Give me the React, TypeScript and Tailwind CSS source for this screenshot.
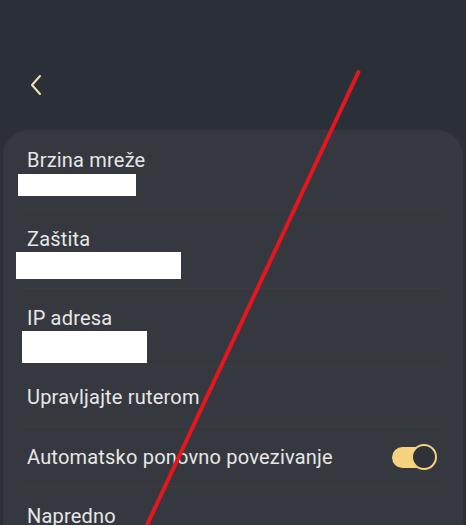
import React from 'react';

const Divider = () => <div className="mx-[19px] h-px bg-[#3e3b38]" />;

export default function App() {
  return (
    <div
      className="relative h-[525px] w-[466px] overflow-hidden bg-[#2b3038]"
      style={{ fontFamily: 'Roboto, "Noto Sans", sans-serif' }}
    >
      {/* header */}
      <div className="h-[130px] pt-[74px] pl-[30px]">
        <svg width="14" height="22" viewBox="0 0 14 22" fill="none">
          <path d="M10 2 L2 11 L10 20" stroke="#f1e3b4" strokeWidth="2" strokeLinecap="round" strokeLinejoin="round" />
        </svg>
      </div>

      {/* card */}
      <div className="mx-[3px] h-[420px] rounded-t-[26px] bg-[#35383f] text-[20px] leading-[26px] tracking-[0.2px] text-[#e7e7e7]">
        <div className="pt-[17px] pb-[13px] pl-[24px]">
          <div>Brzina mreže</div>
          <div className="mt-[1px] ml-[-9px] h-[22px] w-[118px] bg-white" />
        </div>
        <Divider />
        <div className="pt-[16px] pb-[9px] pl-[24px]">
          <div>Zaštita</div>
          <div className="ml-[-11px] h-[27px] w-[165px] bg-white" />
        </div>
        <Divider />
        <div className="pt-[16px] pb-[3px] pl-[24px]">
          <div>IP adresa</div>
          <div className="ml-[-5px] h-[32px] w-[125px] bg-white" />
        </div>
        <Divider />
        <div className="pt-[17px] pb-[16px] pl-[24px]">
          <div>Upravljajte ruterom</div>
        </div>
        <Divider />
        <div className="flex items-center justify-between pt-[17px] pb-[16px] pl-[24px] pr-[27px]">
          <div>Automatsko ponovno povezivanje</div>
          <div className="relative h-[21px] w-[44px] rounded-full bg-[#f6d17e]">
            <div className="absolute right-[-1px] top-1/2 h-[26px] w-[26px] -translate-y-1/2 rounded-full border-2 border-[#f6d17e] bg-[#2f3339]" />
          </div>
        </div>
        <Divider />
        <div className="pt-[16px] pl-[24px]">
          <div>Napredno</div>
        </div>
      </div>

      {/* red stroke over screenshot */}
      <svg className="pointer-events-none absolute inset-0" width="466" height="525" viewBox="0 0 466 525">
        <line x1="358.5" y1="72" x2="140" y2="540" stroke="#e5161e" strokeWidth="4" strokeLinecap="round" />
      </svg>
    </div>
  );
}
